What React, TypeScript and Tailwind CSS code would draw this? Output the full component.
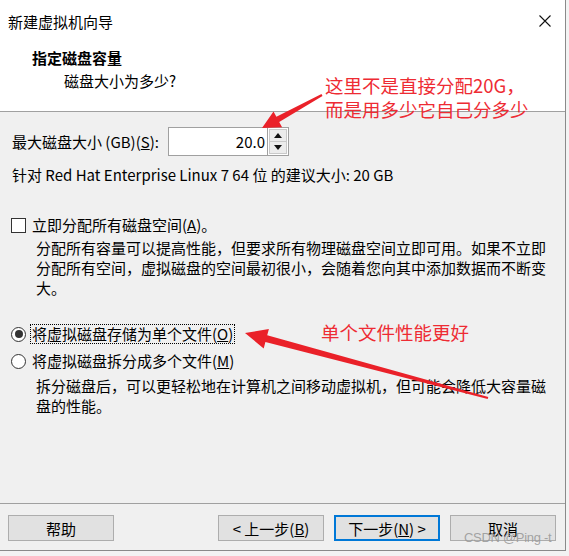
import { FC, ReactNode } from 'react';

const ui = "font-['Noto_Sans_CJK_SC',sans-serif]";

const Btn: FC<{ children: ReactNode; primary?: boolean }> = ({ children, primary }) => (
  <div
    className={
      'flex h-[26px] w-[106px] items-center justify-center bg-[#e1e1e1] text-[15px] leading-none text-black ' +
      (primary ? 'border-2 border-[#0078d7]' : 'border border-[#adadad]')
    }
  >
    {children}
  </div>
);

const Radio: FC<{ checked?: boolean }> = ({ checked }) => (
  <div className="flex h-[15px] w-[15px] items-center justify-center rounded-full border border-[#333] bg-white">
    {checked && <div className="h-[8px] w-[8px] rounded-full bg-[#333]" />}
  </div>
);

const Arrows: FC = () => (
  <svg className="pointer-events-none absolute left-0 top-0" width="566" height="551" viewBox="0 0 566 551">
    <polygon
      fill="#ea2129"
      points="262,128 273.5,111.4 276.4,116.7 321.5,94.1 322.5,95.9 279.2,121.9 282.1,127.2"
    />
    <polygon
      fill="#ea2129"
      points="245,333 268.9,329 267.2,335.3 488.3,397 487.7,399 265.4,342.1 263.7,348.4"
    />
  </svg>
);

export default function App() {
  return (
    <div className={'min-h-[556px] w-[569px] bg-[#f3f3f3] ' + ui}>
      <div className="relative flex h-[551px] w-[566px] flex-col border-b border-r border-[#8a8a8a] bg-[#f0f0f0] text-[15px] text-black">
        {/* header */}
        <div className="h-[112px] border-b border-[#a0a0a0] bg-white">
          <div className="flex h-[44px] items-center justify-between pl-2 pr-[14px]">
            <span className="leading-[22px]">新建虚拟机向导</span>
            <svg width="12" height="12" viewBox="0 0 12 12" className="mb-[3px]">
              <path d="M0.5 0.5 L11.5 11.5 M11.5 0.5 L0.5 11.5" stroke="#111" strokeWidth="1.1" />
            </svg>
          </div>
          <div className="mt-[3px] pl-8 font-bold leading-[22px]">指定磁盘容量</div>
          <div className="mt-px pl-16 leading-[22px]">磁盘大小为多少?</div>
        </div>

        {/* body */}
        <div className="flex flex-1 flex-col">
          <div className="mt-[15px] flex h-[29px] items-center pl-3">
            <span className="w-[156px] leading-[22px]">
              最大磁盘大小 (GB)(<u>S</u>):
            </span>
            <div className="flex h-[29px] w-[100px] items-center justify-end border border-[#a0a0a0] bg-white pr-[2px] leading-none">
              20.0
            </div>
            <div className="flex h-[29px] w-[21px] flex-col border border-l-0 border-[#a0a0a0] bg-white p-px">
              <div className="flex flex-1 items-center justify-center border border-[#c9c9c9] bg-[#ececec]">
                <svg width="8" height="5" viewBox="0 0 8 5">
                  <path d="M0 5 L4 0 L8 5 Z" fill="#111" />
                </svg>
              </div>
              <div className="flex flex-1 items-center justify-center border border-t-0 border-[#c9c9c9] bg-[#ececec]">
                <svg width="8" height="5" viewBox="0 0 8 5">
                  <path d="M0 0 L8 0 L4 5 Z" fill="#111" />
                </svg>
              </div>
            </div>
          </div>
          <div className="mt-[9px] pl-3 leading-[20px]">针对 Red Hat Enterprise Linux 7 64 位 的建议大小: 20 GB</div>

          <div className="mt-[30px] flex h-[20px] items-center pl-[11px]">
            <div className="h-[15px] w-[15px] border border-[#333] bg-white" />
            <span className="ml-[6px] leading-[20px]">
              立即分配所有磁盘空间(<u>A</u>)。
            </span>
          </div>
          <div className="mt-[3px] pl-[36px] pr-4 leading-[20px]">
            <div>分配所有容量可以提高性能，但要求所有物理磁盘空间立即可用。如果不立即</div>
            <div>分配所有空间，虚拟磁盘的空间最初很小，会随着您向其中添加数据而不断变</div>
            <div>大。</div>
          </div>

          <div className="mt-[26px] flex h-[20px] items-center pl-[11px]">
            <Radio checked />
            <span className="ml-[4px] border border-dotted border-black px-px leading-[18px]">
              将虚拟磁盘存储为单个文件(<u>O</u>)
            </span>
          </div>
          <div className="mt-[7px] flex h-[20px] items-center pl-[11px]">
            <Radio />
            <span className="ml-[6px] leading-[20px]">
              将虚拟磁盘拆分成多个文件(<u>M</u>)
            </span>
          </div>
          <div className="mt-[5px] pl-[36px] pr-4 leading-[20px]">
            <div>拆分磁盘后，可以更轻松地在计算机之间移动虚拟机，但可能会降低大容量磁</div>
            <div>盘的性能。</div>
          </div>
        </div>

        {/* footer */}
        <div className="flex h-[47px] border-t border-[#a0a0a0] pl-2 pr-[9px] pt-[11px]">
          <Btn>帮助</Btn>
          <div className="ml-auto flex gap-[10px]">
            <Btn>
              &lt; 上一步(<u>B</u>)
            </Btn>
            <Btn primary>
              下一步(<u>N</u>) &gt;
            </Btn>
            <Btn>取消</Btn>
          </div>
        </div>

        {/* annotations */}
        <div className="pointer-events-none absolute left-[325px] top-[73px] whitespace-nowrap text-[18.5px] leading-[24px] text-[#ee2b33]">
          <div>这里不是直接分配20G，</div>
          <div>而是用多少它自己分多少</div>
        </div>
        <div className="pointer-events-none absolute left-[321px] top-[320px] whitespace-nowrap text-[18.5px] leading-[24px] text-[#ee2b33]">
          单个文件性能更好
        </div>
        <Arrows />
        <div className="pointer-events-none absolute left-[464px] top-[530px] whitespace-nowrap font-['Liberation_Sans',sans-serif] text-[13px] leading-[16px] tracking-[-0.3px] text-[#9a9a9a]/90">
          CSDN @Ping -t
        </div>
      </div>
    </div>
  );
}
